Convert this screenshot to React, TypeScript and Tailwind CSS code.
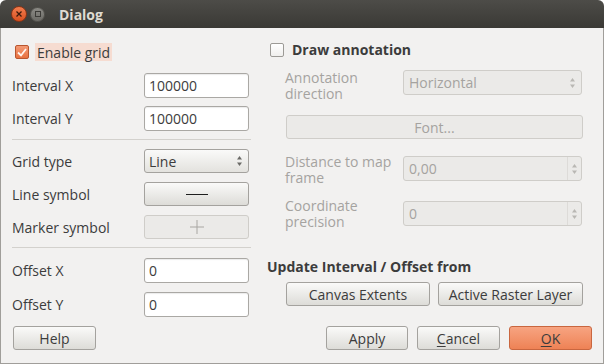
import React from 'react';

const font = { fontFamily: '"Open Sans", "DejaVu Sans", sans-serif' };

function Arrows({ dim }: { dim?: boolean }) {
  const c = dim ? '#b9b7b3' : '#6b6a67';
  return (
    <svg width="7" height="12" viewBox="0 0 7 12" className="shrink-0">
      <path d="M3.5 1 L6 4.5 H1 Z" fill={c} />
      <path d="M3.5 11 L6 7.5 H1 Z" fill={c} />
    </svg>
  );
}

function LineEdit({ value }: { value: string }) {
  return (
    <div className="flex h-[25px] w-[105px] items-center rounded-[3px] border border-[#aaa8a4] bg-white pl-[4px] text-[14px] text-[#3c3c3c] shadow-[inset_0_1px_1px_rgba(0,0,0,0.08)]">
      {value}
    </div>
  );
}

function Button({ children, className = '', disabled }: { children: React.ReactNode; className?: string; disabled?: boolean }) {
  return (
    <div
      className={
        'flex h-[24px] items-center justify-center rounded-[3px] border text-[14px] ' +
        (disabled
          ? 'border-[#cfcdc9] bg-[#ebeae8] text-[#a5a3a0] '
          : 'border-[#a4a29e] bg-gradient-to-b from-[#fafaf9] to-[#dddcd8] text-[#3c3c3c] ') +
        className
      }
    >
      {children}
    </div>
  );
}

function SpinBox({ value }: { value: string }) {
  return (
    <div className="flex h-[25px] w-[179px] items-stretch rounded-[3px] border border-[#cfcdc9] bg-[#ebeae8] text-[14px] text-[#a5a3a0]">
      <div className="flex flex-1 items-center pl-[5px]">{value}</div>
      <div className="flex w-[14px] items-center justify-center border-l border-[#dddbd8]">
        <Arrows dim />
      </div>
    </div>
  );
}

function Row({ label, children }: { label: string; children: React.ReactNode }) {
  return (
    <div className="flex items-center">
      <div className="w-[132px] text-[14px] text-[#3c3c3c]">{label}</div>
      {children}
    </div>
  );
}

function DimRow({ label, children, className = '' }: { label: React.ReactNode; children: React.ReactNode; className?: string }) {
  return (
    <div className={'flex items-start ' + className}>
      <div className="w-[118px] text-[14px] leading-[16px] text-[#a5a3a0]">{label}</div>
      {children}
    </div>
  );
}

export default function App() {
  return (
    <div className="h-[364px] w-[605px] bg-white" style={font}>
      <div className="flex h-[364px] w-[604px] flex-col">
        <div className="flex h-[28px] shrink-0 items-center rounded-t-[6px] bg-gradient-to-b from-[#4d4c48] to-[#3a3935] pl-[11px]">
          <div className="flex h-[16px] w-[16px] items-center justify-center rounded-full border border-[#8a3416] bg-gradient-to-b from-[#f27d4e] to-[#d8501f]">
            <svg width="6" height="6" viewBox="0 0 6 6">
              <path d="M0.5 0.5 L5.5 5.5 M5.5 0.5 L0.5 5.5" stroke="#3b1a0c" strokeWidth="1.3" />
            </svg>
          </div>
          <div className="ml-[3px] flex h-[15px] w-[15px] items-center justify-center rounded-full border border-[#55544f] bg-gradient-to-b from-[#8b8a85] to-[#6c6b66]">
            <div className="h-[6px] w-[6px] border border-[#3c3b37]" />
          </div>
          <div className="ml-[14px] text-[14px] font-bold text-[#dfdbd2]">Dialog</div>
        </div>

        <div className="flex flex-1 flex-col border-x border-b border-[#a09e9a] bg-[#f2f1f0]">
          <div className="flex">
            {/* left column */}
            <div className="flex w-[250px] flex-col pl-[11px] pt-[15px]">
              <div className="flex h-[18px] items-center">
                <div className="ml-[3px] flex h-[14px] w-[14px] items-center justify-center rounded-[2px] border border-[#b9562f] bg-gradient-to-b from-[#f39a75] to-[#e8713f]">
                  <svg width="10" height="9" viewBox="0 0 10 9">
                    <path d="M1 4.5 L4 7.5 L9 1" stroke="#fff5ef" strokeWidth="1.8" fill="none" />
                  </svg>
                </div>
                <div className="ml-[6px] flex h-[18px] items-center bg-[#f6dcd1] px-[2px] text-[14px] text-[#3c3c3c]">Enable grid</div>
              </div>
              <div className="mt-[12px]">
                <Row label="Interval X"><LineEdit value="100000" /></Row>
              </div>
              <div className="mt-[8px]">
                <Row label="Interval Y"><LineEdit value="100000" /></Row>
              </div>
              <div className="mt-[8px] h-px w-[239px] bg-[#d3d1cd]" />
              <div className="mt-[9px]">
                <Row label="Grid type">
                  <div className="flex h-[24px] w-[105px] items-center justify-between rounded-[3px] border border-[#a4a29e] bg-gradient-to-b from-[#fafaf9] to-[#e3e2de] pl-[4px] pr-[5px] text-[14px] text-[#3c3c3c]">
                    Line
                    <Arrows />
                  </div>
                </Row>
              </div>
              <div className="mt-[9px]">
                <Row label="Line symbol">
                  <Button className="w-[105px]">
                    <div className="h-px w-[22px] bg-[#1e1e1e]" />
                  </Button>
                </Row>
              </div>
              <div className="mt-[9px]">
                <Row label="Marker symbol">
                  <Button className="w-[105px]" disabled>
                    <svg width="16" height="16" viewBox="0 0 16 16">
                      <path d="M8 1 V15 M1 8 H15" stroke="#a8a6a2" strokeWidth="1" />
                    </svg>
                  </Button>
                </Row>
              </div>
              <div className="mt-[8px] h-px w-[239px] bg-[#d3d1cd]" />
              <div className="mt-[10px]">
                <Row label="Offset X"><LineEdit value="0" /></Row>
              </div>
              <div className="mt-[9px]">
                <Row label="Offset Y"><LineEdit value="0" /></Row>
              </div>
            </div>

            {/* right column */}
            <div className="ml-[16px] flex w-[316px] flex-col pt-[14px]">
              <div className="flex h-[15px] items-center">
                <div className="ml-[3px] h-[14px] w-[14px] rounded-[2px] border border-[#9c9a96] bg-gradient-to-b from-white to-[#f0efed]" />
                <div className="ml-[8px] text-[14px] font-bold text-[#3c3c3c]">Draw annotation</div>
              </div>
              <div className="mt-[13px] pl-[18px]">
                <DimRow label={<>Annotation<br />direction</>} className="items-center">
                  <div className="flex h-[25px] w-[179px] items-center justify-between rounded-[3px] border border-[#cfcdc9] bg-[#ebeae8] pl-[5px] pr-[5px] text-[14px] text-[#a5a3a0]">
                    Horizontal
                    <Arrows dim />
                  </div>
                </DimRow>
              </div>
              <div className="mt-[13px] pl-[19px]">
                <Button disabled className="w-[297px]">Font...</Button>
              </div>
              <div className="mt-[15px] pl-[18px]">
                <DimRow label={<>Distance to map<br />frame</>}>
                  <div className="mt-[2px]"><SpinBox value="0,00" /></div>
                </DimRow>
              </div>
              <div className="mt-[12px] pl-[18px]">
                <DimRow label={<>Coordinate<br />precision</>}>
                  <div className="mt-[3px]"><SpinBox value="0" /></div>
                </DimRow>
              </div>
              <div className="mt-[29px] h-[16px] text-[14px] font-bold leading-[16px] text-[#3c3c3c]">Update Interval / Offset from</div>
              <div className="mt-[7px] flex gap-[8px] pl-[19px]">
                <Button className="w-[144px]">Canvas Extents</Button>
                <Button className="w-[145px]">Active Raster Layer</Button>
              </div>
            </div>
          </div>

          <div className="mt-[9px] flex pl-[12px] pr-[11px]">
            <Button className="w-[83px]">Help</Button>
            <div className="ml-auto flex gap-[9px]">
              <Button className="w-[82px]">Apply</Button>
              <Button className="w-[83px]"><span><span className="underline underline-offset-2">C</span>ancel</span></Button>
              <div className="flex h-[24px] w-[83px] items-center justify-center rounded-[3px] border border-[#c9663f] bg-gradient-to-b from-[#f7a481] to-[#ee8255] text-[14px] text-[#3c3c3c]">
                <span><span className="underline underline-offset-2">O</span>K</span>
              </div>
            </div>
          </div>
        </div>
      </div>
    </div>
  );
}
